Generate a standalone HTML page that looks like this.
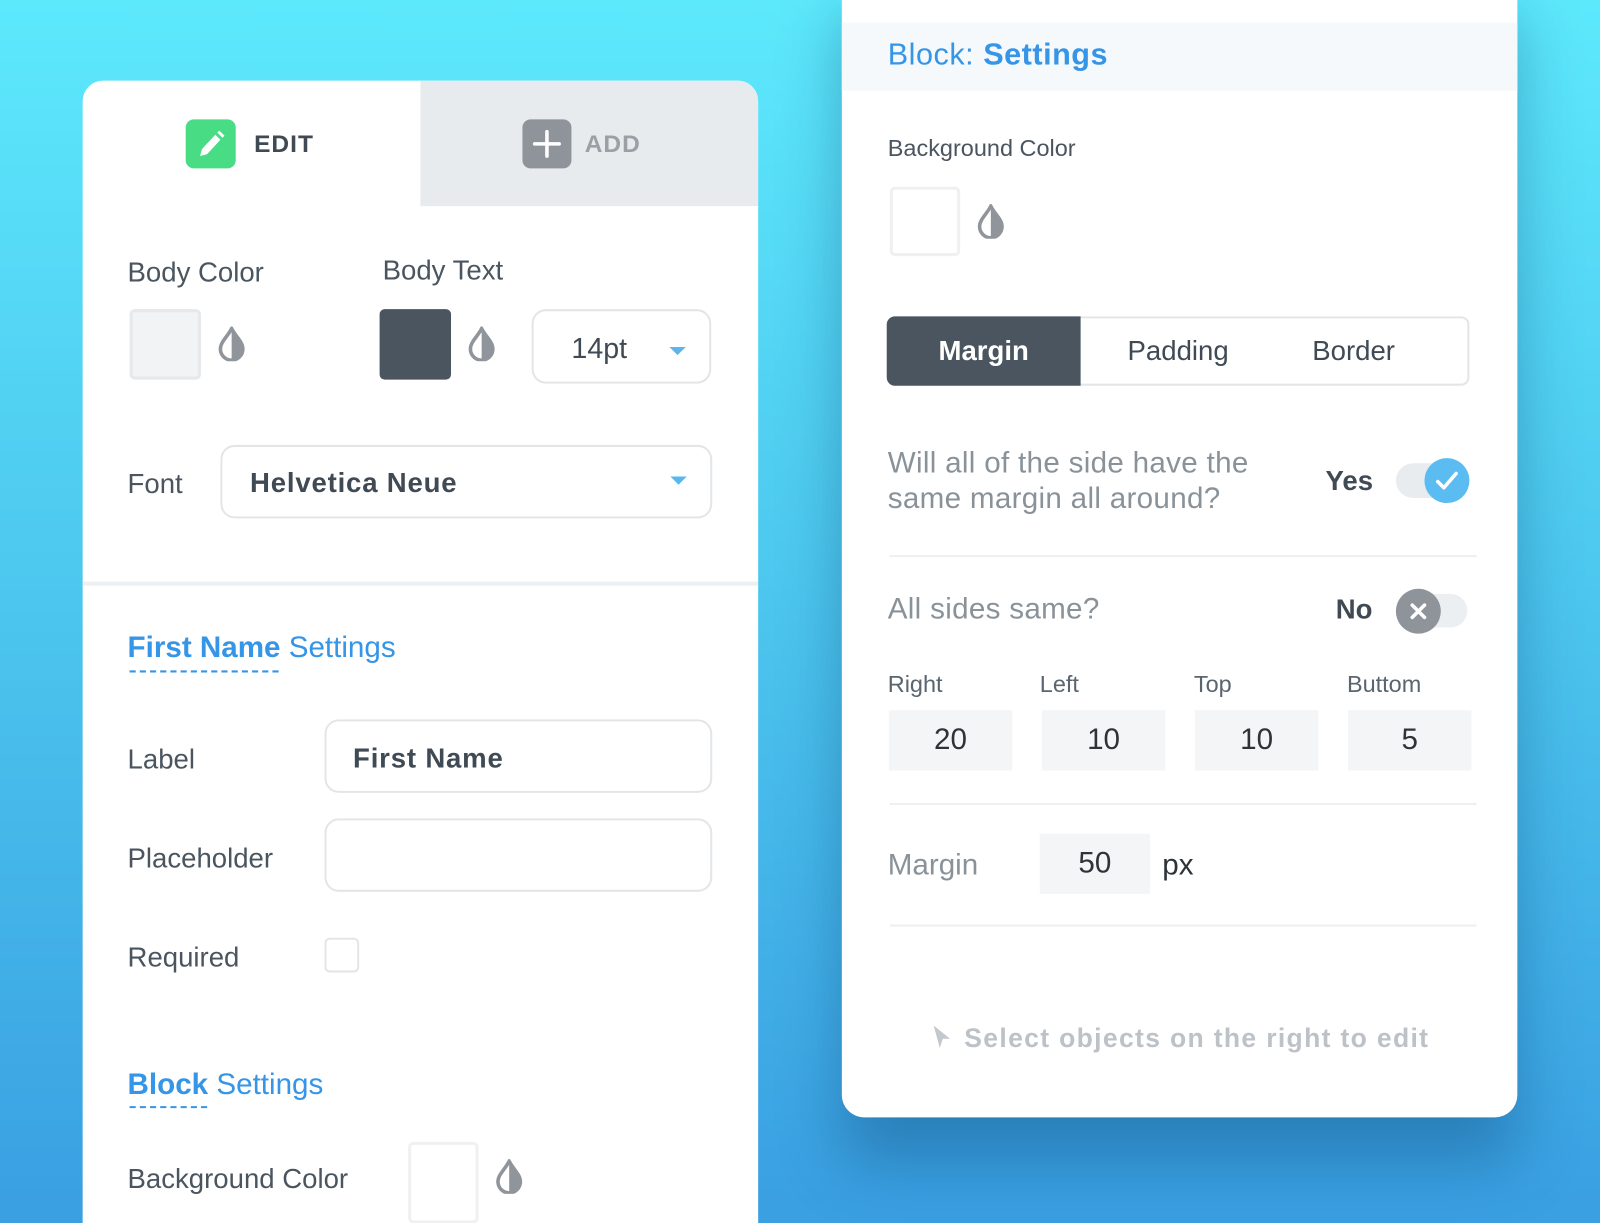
<!DOCTYPE html>
<html><head><meta charset="utf-8">
<style>
*{box-sizing:border-box;margin:0;padding:0}
html,body{width:1600px;height:1200px;overflow:hidden;background:#3aa0e2}
body{font-family:"Liberation Sans",sans-serif}
#w{position:absolute;left:0;top:0;width:1568px;height:1176px;transform:scale(1.020408);transform-origin:0 0;background:linear-gradient(180deg,#5de9fc 0%,#4cc6ee 50%,#3aa0e2 100%)}
.a{position:absolute}
.t{position:absolute;white-space:nowrap;line-height:1}
.card{position:absolute;background:#fff}
.lbl{color:#4a5560;font-size:27px}
.drop{position:absolute;width:28px;height:34px}
.sw{position:absolute;border:3px solid #e6e8ea;border-radius:5px}
.inp{position:absolute;border:2px solid #e3e6e9;border-radius:14px;background:#fff}
.caret{position:absolute;width:0;height:0;border-left:8px solid transparent;border-right:8px solid transparent;border-top:8px solid #5bb6ee}
.hr{position:absolute;height:2px;background:#edf0f2}
.box{position:absolute;background:#f4f5f7;color:#2e3338;font-size:29px;display:flex;align-items:center;justify-content:center}
</style></head><body><div id="w">

<div class="card" style="left:81px;top:79px;width:662px;height:1120px;border-radius:20px 20px 0 0;overflow:hidden">
  <div class="a" style="left:331px;top:0;width:331px;height:123px;background:#e7ebed"></div>
</div>
<div class="a" style="left:182px;top:117px;width:49px;height:48px;border-radius:8px;background:#48dc85">
  <svg width="49" height="48" viewBox="0 0 49 48"><path d="M14 36 L16 29 L29 15 L34 20 L21 34 Z" fill="#fff"/><path d="M31 13 L33 11 L38 16 L36 18 Z" fill="#fff"/></svg>
</div>
<div class="t" style="left:249px;top:130px;font-size:24px;font-weight:bold;color:#3f4a54;letter-spacing:1px">EDIT</div>
<div class="a" style="left:512px;top:117px;width:48px;height:48px;border-radius:8px;background:#8f949a">
  <svg width="48" height="48" viewBox="0 0 48 48"><path d="M24 12 V36 M12 24 H36" stroke="#fff" stroke-width="3.5" stroke-linecap="round"/></svg>
</div>
<div class="t" style="left:573px;top:130px;font-size:24px;font-weight:bold;color:#9aa0a6;letter-spacing:1px">ADD</div>

<div class="t lbl" style="left:125px;top:254px">Body Color</div>
<div class="t lbl" style="left:375px;top:252px">Body Text</div>
<div class="sw" style="left:127px;top:303px;width:70px;height:69px;background:#f2f3f5"></div>
<svg class="drop" style="left:213px;top:320px" viewBox="0 0 28 34"><path d="M14 2 C10 10 3 15 3 22 A11 11 0 0 0 25 22 C25 15 18 10 14 2 Z" fill="none" stroke="#90959b" stroke-width="3.5"/><path d="M14 2 C18 10 25 15 25 22 A11 11 0 0 1 14 33 Z" fill="#90959b"/></svg>
<div class="a" style="left:372px;top:303px;width:70px;height:69px;border-radius:5px;background:#4a555f"></div>
<svg class="drop" style="left:458px;top:320px" viewBox="0 0 28 34"><path d="M14 2 C10 10 3 15 3 22 A11 11 0 0 0 25 22 C25 15 18 10 14 2 Z" fill="none" stroke="#90959b" stroke-width="3.5"/><path d="M14 2 C18 10 25 15 25 22 A11 11 0 0 1 14 33 Z" fill="#90959b"/></svg>
<div class="inp" style="left:521px;top:303px;width:176px;height:73px"></div>
<div class="t" style="left:560px;top:328px;font-size:28px;color:#3f4a54">14pt</div>
<div class="caret" style="left:656px;top:340px"></div>

<div class="t lbl" style="left:125px;top:461px">Font</div>
<div class="inp" style="left:216px;top:436px;width:482px;height:72px"></div>
<div class="t" style="left:245px;top:460px;font-size:27px;font-weight:bold;color:#3f4a54;letter-spacing:0.8px">Helvetica Neue</div>
<div class="caret" style="left:657px;top:467px"></div>

<div class="a" style="left:81px;top:570px;width:662px;height:4px;background:#edf0f2"></div>

<div class="t" style="left:125px;top:621px;font-size:29px;color:#3595e6"><b>First Name</b> Settings</div>
<div class="a" style="left:127px;top:657px;width:146px;border-top:2px dashed #3595e6"></div>

<div class="t lbl" style="left:125px;top:731px">Label</div>
<div class="inp" style="left:318px;top:705px;width:380px;height:72px"></div>
<div class="t" style="left:346px;top:730px;font-size:27px;font-weight:bold;color:#3f4a54;letter-spacing:0.8px">First Name</div>
<div class="t lbl" style="left:125px;top:828px">Placeholder</div>
<div class="inp" style="left:318px;top:802px;width:380px;height:72px"></div>
<div class="t lbl" style="left:125px;top:925px">Required</div>
<div class="a" style="left:318px;top:919px;width:34px;height:34px;border:2px solid #e3e6e9;border-radius:5px"></div>

<div class="t" style="left:125px;top:1049px;font-size:29px;color:#3595e6"><b>Block</b> Settings</div>
<div class="a" style="left:127px;top:1084px;width:76px;border-top:2px dashed #3595e6"></div>
<div class="t lbl" style="left:125px;top:1142px">Background Color</div>
<div class="sw" style="left:400px;top:1119px;width:69px;height:80px;border-color:#eef0f2;background:#fff"></div>
<svg class="drop" style="left:485px;top:1136px" viewBox="0 0 28 34"><path d="M14 2 C10 10 3 15 3 22 A11 11 0 0 0 25 22 C25 15 18 10 14 2 Z" fill="none" stroke="#90959b" stroke-width="3.5"/><path d="M14 2 C18 10 25 15 25 22 A11 11 0 0 1 14 33 Z" fill="#90959b"/></svg>

<div class="card" style="left:825px;top:-30px;width:662px;height:1125px;border-radius:0 0 22px 22px;box-shadow:0 45px 60px rgba(10,60,110,0.35)">
  <div class="a" style="left:0;top:52px;width:662px;height:67px;background:#f5f9fc"></div>
</div>
<div class="t" style="left:870px;top:39px;font-size:30px;color:#3595e6;letter-spacing:0.5px">Block: <b>Settings</b></div>
<div class="t" style="left:870px;top:134px;font-size:23px;color:#4a5560">Background Color</div>
<div class="sw" style="left:872px;top:183px;width:69px;height:68px;border-color:#eef0f2;background:#fff"></div>
<svg class="drop" style="left:957px;top:200px" viewBox="0 0 28 34"><path d="M14 2 C10 10 3 15 3 22 A11 11 0 0 0 25 22 C25 15 18 10 14 2 Z" fill="none" stroke="#90959b" stroke-width="3.5"/><path d="M14 2 C18 10 25 15 25 22 A11 11 0 0 1 14 33 Z" fill="#90959b"/></svg>

<div class="a" style="left:869px;top:310px;width:571px;height:68px;border:2px solid #e3e6e9;border-radius:8px"></div>
<div class="a" style="left:869px;top:310px;width:190px;height:68px;border-radius:8px 0 0 8px;background:#4a555f"></div>
<div class="t" style="left:869px;width:190px;text-align:center;top:331px;font-size:27px;color:#fff;font-weight:bold">Margin</div>
<div class="t" style="left:1105px;top:331px;font-size:27px;color:#3f4a54">Padding</div>
<div class="t" style="left:1286px;top:331px;font-size:27px;color:#3f4a54">Border</div>

<div class="t" style="left:870px;top:437px;font-size:29px;color:#8a9299;line-height:35px;letter-spacing:0.3px">Will all of the side have the<br>same margin all around?</div>
<div class="t" style="left:1299px;top:458px;font-size:27px;font-weight:bold;color:#3f4a54">Yes</div>
<div class="a" style="left:1368px;top:454px;width:72px;height:34px;border-radius:17px;background:#e8ecef"></div>
<div class="a" style="left:1396px;top:449px;width:44px;height:44px;border-radius:50%;background:#5bbcf2">
  <svg width="44" height="44" viewBox="0 0 44 44"><path d="M13 23 L19 29 L31 15" fill="none" stroke="#fff" stroke-width="3.5" stroke-linecap="round" stroke-linejoin="round"/></svg>
</div>
<div class="hr" style="left:872px;top:544px;width:575px"></div>

<div class="t" style="left:870px;top:583px;font-size:29px;color:#8a9299;letter-spacing:0.3px">All sides same?</div>
<div class="t" style="left:1309px;top:584px;font-size:27px;font-weight:bold;color:#3f4a54">No</div>
<div class="a" style="left:1370px;top:582px;width:68px;height:33px;border-radius:17px;background:#eceff1"></div>
<div class="a" style="left:1368px;top:577px;width:44px;height:44px;border-radius:50%;background:#8f949a">
  <svg width="44" height="44" viewBox="0 0 44 44"><path d="M16 16 L28 28 M28 16 L16 28" stroke="#fff" stroke-width="3.5" stroke-linecap="round"/></svg>
</div>

<div class="t" style="left:870px;top:659px;font-size:23px;color:#5a6570">Right</div>
<div class="t" style="left:1019px;top:659px;font-size:23px;color:#5a6570">Left</div>
<div class="t" style="left:1170px;top:659px;font-size:23px;color:#5a6570">Top</div>
<div class="t" style="left:1320px;top:659px;font-size:23px;color:#5a6570">Buttom</div>
<div class="box" style="left:871px;top:696px;width:121px;height:59px">20</div>
<div class="box" style="left:1021px;top:696px;width:121px;height:59px">10</div>
<div class="box" style="left:1171px;top:696px;width:121px;height:59px">10</div>
<div class="box" style="left:1321px;top:696px;width:121px;height:59px">5</div>
<div class="hr" style="left:872px;top:787px;width:575px"></div>

<div class="t" style="left:870px;top:834px;font-size:29px;color:#8a9299">Margin</div>
<div class="box" style="left:1019px;top:817px;width:108px;height:59px">50</div>
<div class="t" style="left:1139px;top:834px;font-size:29px;color:#2e3338">px</div>
<div class="hr" style="left:872px;top:906px;width:575px"></div>

<svg class="a" style="left:913px;top:1004px" width="20" height="24" viewBox="0 0 20 24"><path d="M2 1 L18 14 L11 14 L8 23 Z" fill="#c2c8ce"/></svg>
<div class="t" style="left:945px;top:1004px;font-size:26px;font-weight:bold;color:#bcc2c8;letter-spacing:1.3px">Select objects on the right to edit</div>

</div></body></html>
